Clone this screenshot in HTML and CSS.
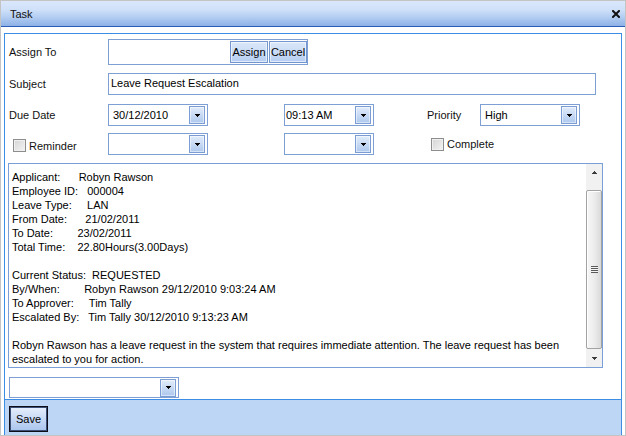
FILE: index.html
```html
<!DOCTYPE html>
<html>
<head>
<meta charset="utf-8">
<title>Task</title>
<link rel="stylesheet" href="styles.css">
</head>
<body>
<div class="window">
  <div class="titlebar">
    <span class="title">Task</span>
    <svg class="close" width="8" height="8" viewBox="0 0 8 8"><path d="M1 1L7 7M7 1L1 7" stroke="#111" stroke-width="2" stroke-linecap="square" fill="none"/></svg>
  </div>
  <div class="body">
    <div class="panel">
      <div class="form">
        <div class="row r1">
          <span class="lbl">Assign To</span>
          <div class="assign-box">
            <button class="btn">Assign</button>
            <button class="btn">Cancel</button>
          </div>
        </div>
        <div class="row r2">
          <span class="lbl">Subject</span>
          <div class="field subject">Leave Request Escalation</div>
        </div>
        <div class="grid r3">
          <span class="lbl">Due Date</span>
          <div class="combo"><span class="val">30/12/2010</span><span class="dd"><svg width="5" height="3" viewBox="0 0 5 3"><path d="M0 0h5v1H0zM1 1h3v1H1zM2 2h1v1H2z" fill="#000"/></svg></span></div>
          <span></span>
          <div class="combo time"><span class="val">09:13 AM</span><span class="dd"><svg width="5" height="3" viewBox="0 0 5 3"><path d="M0 0h5v1H0zM1 1h3v1H1zM2 2h1v1H2z" fill="#000"/></svg></span></div>
          <span></span>
          <span class="lbl">Priority</span>
          <div class="combo"><span class="val">High</span><span class="dd"><svg width="5" height="3" viewBox="0 0 5 3"><path d="M0 0h5v1H0zM1 1h3v1H1zM2 2h1v1H2z" fill="#000"/></svg></span></div>
        </div>
        <div class="grid r4">
          <span class="check rem"><span class="box"></span>Reminder</span>
          <div class="combo"><span class="val"></span><span class="dd"><svg width="5" height="3" viewBox="0 0 5 3"><path d="M0 0h5v1H0zM1 1h3v1H1zM2 2h1v1H2z" fill="#000"/></svg></span></div>
          <span></span>
          <div class="combo time"><span class="val"></span><span class="dd"><svg width="5" height="3" viewBox="0 0 5 3"><path d="M0 0h5v1H0zM1 1h3v1H1zM2 2h1v1H2z" fill="#000"/></svg></span></div>
          <span></span>
          <span class="check"><span class="box"></span>Complete</span>
          <span></span>
        </div>
        <div class="memo">
          <div class="memo-text">Applicant:      Robyn Rawson
Employee ID:   000004
Leave Type:     LAN
From Date:      21/02/2011
To Date:        23/02/2011
Total Time:    22.80Hours(3.00Days)

Current Status:  REQUESTED
By/When:        Robyn Rawson 29/12/2010 9:03:24 AM
To Approver:     Tim Tally
Escalated By:   Tim Tally 30/12/2010 9:13:23 AM

Robyn Rawson has a leave request in the system that requires immediate attention. The leave request has been escalated to you for action.</div>
          <div class="scrollbar">
            <div class="sb-btn"><svg width="5" height="3" viewBox="0 0 5 3"><path d="M2 0h1v1H2zM1 1h3v1H1zM0 2h5v1H0z" fill="#3c3c3c"/></svg></div>
            <div class="sb-track-top"></div>
            <div class="sb-thumb"><span class="grip"></span></div>
            <div class="sb-track-bot"></div>
            <div class="sb-btn"><svg width="5" height="3" viewBox="0 0 5 3"><path d="M0 0h5v1H0zM1 1h3v1H1zM2 2h1v1H2z" fill="#3c3c3c"/></svg></div>
          </div>
        </div>
        <div class="combo wide"><span class="val"></span><span class="dd"><svg width="5" height="3" viewBox="0 0 5 3"><path d="M0 0h5v1H0zM1 1h3v1H1zM2 2h1v1H2z" fill="#000"/></svg></span></div>
      </div>
      <div class="footer">
        <button class="save">Save</button>
      </div>
    </div>
  </div>
</div>
</body>
</html>
```

FILE: styles.css
```css
html, body {
  margin: 0;
  padding: 0;
  background: #fff;
}
body {
  font-family: "Liberation Sans", Arial, sans-serif;
  font-size: 11px;
  color: #000;
}
.window {
  width: 626px;
  height: 436px;
  box-sizing: border-box;
  border: 1px solid #c4c4c4;
  background: #fff;
  display: flex;
  flex-direction: column;
}
.titlebar {
  height: 26px;
  flex: none;
  box-sizing: border-box;
  border-bottom: 1px solid #2b5cb6;
  background: linear-gradient(#dbe8fb 0%, #cfe0f9 35%, #b3cdf2 65%, #8eb1e6 100%);
  display: flex;
  align-items: center;
  justify-content: space-between;
  padding: 0 5px 0 9px;
}
.title {
  font-size: 11px;
  color: #111;
}
.close {
  display: block;
}
.body {
  flex: 1;
  padding: 6px 3px 0;
  min-height: 0;
}
.panel {
  height: 402px;
  box-sizing: border-box;
  border: 1px solid #3c8de4;
  border-bottom: none;
  display: flex;
  flex-direction: column;
}
.form {
  flex: none;
  height: 365px;
  box-sizing: border-box;
  padding: 5px 0 1px 4px;
}
.footer {
  flex: 1;
  border-top: 1px solid #3c8de4;
  background: #bed6f5;
  padding: 6px 4px 0;
}
.row {
  display: flex;
  align-items: center;
}
.lbl {
  display: block;
  color: #111;
}
.row .lbl {
  width: 99px;
  flex: none;
}
.r1 { height: 26px; }
.r2 { height: 22px; margin-top: 8px; }
.r3 { margin-top: 9px; }
.r4 { margin-top: 7px; }
.grid {
  display: grid;
  grid-template-columns: 99px 100px 76px 90px 53px 53px 100px;
  height: 22px;
  align-items: center;
}
.r3 .lbl {
  margin-top: -1px;
}
.assign-box {
  width: 200px;
  height: 26px;
  box-sizing: border-box;
  border: 1px solid #7e9fd4;
  display: flex;
  justify-content: flex-end;
  align-items: center;
  gap: 1px;
}
.btn {
  width: 38px;
  height: 22px;
  box-sizing: border-box;
  border: 1px solid #7296cd;
  box-shadow: inset 0 0 0 1px rgba(255, 255, 255, 0.55);
  background: linear-gradient(#dce8f9, #b6cef1);
  font-family: "Liberation Sans", Arial, sans-serif;
  font-size: 11px;
  color: #000;
  padding: 0;
  margin: 0;
}
.field {
  height: 22px;
  box-sizing: border-box;
  border: 1px solid #7e9fd4;
  line-height: 19px;
  padding-left: 2px;
}
.subject {
  width: 488px;
}
.combo {
  height: 22px;
  width: 100px;
  box-sizing: border-box;
  border: 1px solid #7e9fd4;
  display: flex;
  align-items: center;
  justify-content: space-between;
  padding: 0 2px 0 4px;
  background: #fff;
}
.combo .val {
  margin-top: -1px;
}
.combo.time {
  width: 90px;
  padding-left: 1px;
}
.combo.wide {
  width: 170px;
  height: 21px;
  margin-top: 9px;
}
.dd {
  width: 16px;
  height: 18px;
  box-sizing: border-box;
  border: 1px solid #7b9dd4;
  box-shadow: inset 0 0 0 1px rgba(255, 255, 255, 0.5);
  background: linear-gradient(#e2ecfa, #adc8ee);
  display: flex;
  align-items: center;
  justify-content: center;
  flex: none;
}
.dd svg {
  display: block;
  shape-rendering: crispEdges;
}
.check {
  display: flex;
  align-items: center;
  padding-left: 4px;
  color: #111;
}
.check.rem {
  margin-top: 3px;
}
.box {
  width: 13px;
  height: 13px;
  box-sizing: border-box;
  border: 1px solid #8d8d8d;
  background: linear-gradient(135deg, #d4d4d4, #f4f4f4);
  box-shadow: inset 0 0 0 1px #f0f0f0;
  margin-right: 3px;
  flex: none;
}
.memo {
  margin: 8px 0 0 -1px;
  width: 595px;
  height: 205px;
  box-sizing: border-box;
  border: 1px solid #7a9fd8;
  display: flex;
}
.memo-text {
  flex: 1;
  padding: 6px 6px 0 3px;
  white-space: pre-wrap;
  line-height: 14px;
  overflow: hidden;
  color: #000;
}
.scrollbar {
  width: 16px;
  flex: none;
  background: #f1f1f1;
  display: flex;
  flex-direction: column;
}
.sb-btn {
  height: 17px;
  display: flex;
  align-items: center;
  justify-content: center;
}
.sb-btn svg {
  display: block;
  shape-rendering: crispEdges;
}
.sb-track-top { height: 9px; }
.sb-track-bot { height: 1px; }
.sb-thumb {
  height: 159px;
  box-sizing: border-box;
  border: 1px solid #a2a2a2;
  border-radius: 2px;
  background: linear-gradient(90deg, #f7f7f7, #ebebeb 55%, #d9d9d9);
  box-shadow: inset 1px 1px 0 #fff;
  display: flex;
  align-items: center;
  justify-content: center;
}
.grip {
  width: 7px;
  height: 7px;
  background: repeating-linear-gradient(#5a5a5a 0, #5a5a5a 1px, #f4f4f4 1px, #f4f4f4 2px);
}
.save {
  width: 39px;
  height: 26px;
  box-sizing: border-box;
  border: 1px solid #0d0d16;
  box-shadow: inset 0 0 0 1px #3c4f78;
  background: linear-gradient(#e6effc, #a9c4ed);
  font-family: "Liberation Sans", Arial, sans-serif;
  font-size: 11px;
  color: #000;
  padding: 0;
  margin: 0;
}
```
